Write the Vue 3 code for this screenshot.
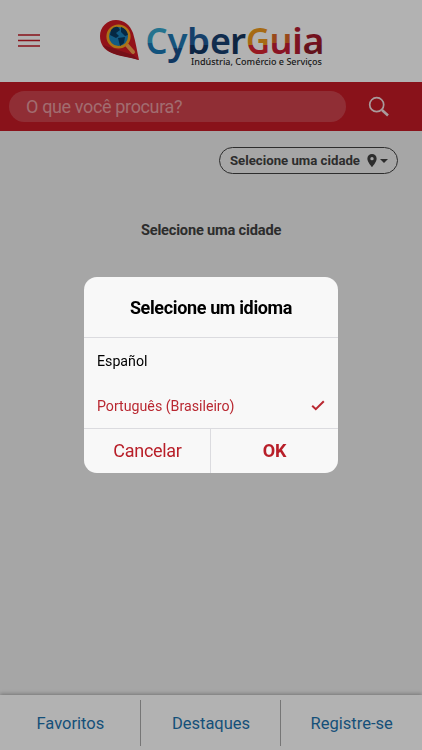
<template>
  <div class="app-page">
    <header class="top-header">
      <button class="menu-button" aria-label="Menu">
        <svg width="22" height="13" viewBox="0 0 22 13">
          <path d="M0 1H22M0 6.5H22M0 12H22" stroke="#c41a26" stroke-width="1.7" />
        </svg>
      </button>

      <svg class="logo" width="230" height="56" viewBox="0 0 230 56" role="img" aria-label="CyberGuia">
        <defs>
          <linearGradient
            v-for="letter in logoLetters"
            :id="letter.id"
            :key="letter.id"
            gradientUnits="userSpaceOnUse"
            x1="0"
            y1="11"
            x2="0"
            y2="45"
          >
            <stop offset="0" :stop-color="letter.top" />
            <stop :offset="letter.split" :stop-color="letter.top" />
            <stop :offset="letter.split" :stop-color="letter.bottom" />
            <stop offset="1" :stop-color="letter.bottom" />
          </linearGradient>
        </defs>

        <!-- Marcador com lupa e globo -->
        <path d="M19 3C10 3 3 10 3 19C3 27 7 33 15 36C24 39 33 40 42 43C40 34 39 26 36 16C33 8 27 3 19 3Z" fill="#d31b25" />
        <path d="M6 28L36 38L42 43C31 40 21 39 15 36Q9 33 6 28Z" fill="#aa1723" />
        <path d="M29 27L36 35" stroke="#f8a04d" stroke-width="4" stroke-linecap="round" />
        <circle cx="21.5" cy="19.5" r="10.8" fill="#1b83bc" stroke="#f5a51f" stroke-width="2.6" />
        <path d="M14 13Q17 9 21 10L23 13L19 16L22 19L19 21L13 18ZM24 10Q30 12 31 18L28 19L24 15ZM21 21L28 20L27 26L23 29Z" fill="#083a60" />

        <g class="logo-name">
          <text
            v-for="letter in logoLetters"
            :key="letter.id"
            :x="letter.x"
            y="36.5"
            :textLength="letter.width"
            lengthAdjust="spacingAndGlyphs"
            :fill="`url(#${letter.id})`"
          >{{ letter.char }}</text>
        </g>
        <text class="logo-slogan" x="94" y="48" textLength="131" lengthAdjust="spacingAndGlyphs">Indústria, Comércio e Serviços</text>
      </svg>
    </header>

    <div class="search-bar">
      <input v-model="search" type="text" placeholder="O que você procura?" />
      <button class="search-button" aria-label="Buscar">
        <svg width="22" height="22" viewBox="0 0 22 22" fill="none" stroke="#f3dfe0">
          <circle cx="8.7" cy="8.7" r="7" stroke-width="1.7" />
          <path d="M14 14L20 19.5" stroke-width="2.6" />
        </svg>
      </button>
    </div>

    <main class="content">
      <button class="city-button">
        <span>Selecione uma cidade</span>
        <svg class="pin" width="10" height="13" viewBox="0 0 10 14">
          <path fill-rule="evenodd" d="M5 0A5 5 0 0 0 0 5C0 8.5 5 14 5 14S10 8.5 10 5A5 5 0 0 0 5 0ZM5 3.2A1.8 1.8 0 1 1 5 6.8A1.8 1.8 0 0 1 5 3.2Z" />
        </svg>
        <svg class="caret" width="8" height="4" viewBox="0 0 8 4"><path d="M0 0H8L4 4Z" /></svg>
      </button>
      <p class="city-message">Selecione uma cidade</p>
    </main>

    <nav class="bottom-tabs">
      <a v-for="tab in tabs" :key="tab" href="#">{{ tab }}</a>
    </nav>

    <div v-if="dialogOpen" class="backdrop">
      <div class="dialog" role="dialog" aria-modal="true">
        <h2>Selecione um idioma</h2>
        <div class="language-list">
          <button
            v-for="language in languages"
            :key="language"
            :class="{ selected: language === selected }"
            @click="selected = language"
          >
            <span>{{ language }}</span>
            <svg v-if="language === selected" width="14" height="11" viewBox="0 0 14 11">
              <path d="M1.2 5.7L4.8 9.2L12.8 1.2" fill="none" stroke="currentColor" stroke-width="2" />
            </svg>
          </button>
        </div>
        <div class="dialog-actions">
          <button @click="dialogOpen = false">Cancelar</button>
          <button class="confirm" @click="dialogOpen = false">OK</button>
        </div>
      </div>
    </div>
  </div>
</template>

<script setup>
import { ref } from 'vue';

const search = ref('');
const dialogOpen = ref(true);
const selected = ref('Português (Brasileiro)');

const languages = ['Español', 'Português (Brasileiro)'];
const tabs = ['Favoritos', 'Destaques', 'Registre-se'];

const logoLetters = [
  { id: 'l-c', char: 'C', x: 48.5, width: 22, top: '#35a5cc', bottom: '#1b78b4', split: 0.45 },
  { id: 'l-y', char: 'y', x: 70.5, width: 20, top: '#1f78b2', bottom: '#164f8b', split: 0.6 },
  { id: 'l-b', char: 'b', x: 90, width: 23, top: '#205c98', bottom: '#123763', split: 0.5 },
  { id: 'l-e', char: 'e', x: 113, width: 21, top: '#173f70', bottom: '#173f70', split: 0.5 },
  { id: 'l-r', char: 'r', x: 133, width: 16, top: '#15365e', bottom: '#15365e', split: 0.5 },
  { id: 'l-g', char: 'G', x: 149, width: 24, top: '#ee981e', bottom: '#d82531', split: 0.5 },
  { id: 'l-u', char: 'u', x: 172.5, width: 23, top: '#dc6928', bottom: '#c51d34', split: 0.43 },
  { id: 'l-i', char: 'i', x: 195, width: 11, top: '#b51c32', bottom: '#b51c32', split: 0.5 },
  { id: 'l-a', char: 'a', x: 205.5, width: 22, top: '#a5192b', bottom: '#8e1b29', split: 0.5 }
];
</script>

<style>
body {
  margin: 0;
}
</style>

<style scoped>
.app-page {
  height: 100vh;
  display: flex;
  flex-direction: column;
  overflow: hidden;
  background: #eee;
  font-family: Roboto, sans-serif;
}

button {
  padding: 0;
  border: none;
  background: none;
  font-family: inherit;
}

.top-header {
  flex: none;
  height: 81.6px;
  box-sizing: border-box;
  padding: 17px 0 0 18px;
  display: flex;
  align-items: flex-start;
  background: #fff;
}

.menu-button {
  width: 22px;
  margin: 17px 57px 0 0;
  display: flex;
}

.logo {
  overflow: visible;
}

.logo-name {
  font: 600 36px 'Noto Sans', sans-serif;
}

.logo-slogan {
  font: 500 9.5px 'Noto Sans', sans-serif;
  fill: #282828;
}

.search-bar {
  flex: none;
  height: 49.6px;
  padding-left: 9px;
  display: flex;
  align-items: center;
  background: #c41a26;
}

.search-bar input {
  width: 337px;
  height: 31px;
  box-sizing: border-box;
  padding: 1px 17px 0;
  border: none;
  border-radius: 16px;
  background: #cf434d;
  font: 18px Roboto, sans-serif;
  letter-spacing: -0.36px;
}

.search-bar input::placeholder {
  color: #e79ca1;
}

.search-button {
  width: 22px;
  height: 22px;
  margin: 2px 0 0 22px;
}

.content {
  flex: 1;
  display: flex;
  flex-direction: column;
}

.city-button {
  align-self: flex-end;
  width: 179px;
  height: 27.5px;
  box-sizing: border-box;
  margin: 15.6px 24px 0 0;
  padding-left: 10px;
  display: flex;
  align-items: center;
  border: 1px solid #414141;
  border-radius: 14px;
  color: #414141;
  font-size: 13.2px;
  font-weight: 700;
}

.city-button svg {
  fill: #414141;
}

.pin {
  margin-left: 7px;
}

.caret {
  margin-left: 3px;
}

.city-message {
  margin: 48px 0 0;
  color: #414141;
  font-size: 14.6px;
  letter-spacing: -0.18px;
  line-height: 17px;
  font-weight: 700;
  text-align: center;
}

.bottom-tabs {
  flex: none;
  height: 55px;
  box-sizing: border-box;
  padding: 5px 0 4px;
  display: flex;
  background: #fff;
  box-shadow: 0 -1px 4px rgba(0, 0, 0, 0.3);
}

.bottom-tabs a {
  flex: 1;
  display: flex;
  align-items: center;
  justify-content: center;
  color: #1e73ae;
  font-size: 16.5px;
  text-decoration: none;
}

.bottom-tabs a + a {
  margin-left: -1px;
  border-left: 1px solid #aaa;
}

.backdrop {
  position: fixed;
  inset: 0;
  display: flex;
  align-items: center;
  justify-content: center;
  background: rgba(0, 0, 0, 0.3);
}

.dialog {
  width: 254px;
  overflow: hidden;
  border-radius: 13px;
  background: #f8f8f8;
}

.dialog h2 {
  height: 60px;
  margin: 0;
  border-bottom: 1px solid #dbdbdf;
  font-size: 18px;
  letter-spacing: -0.36px;
  line-height: 62px;
  font-weight: 700;
  text-align: center;
}

.language-list button {
  width: 100%;
  height: 45px;
  padding: 0 13px;
  display: flex;
  align-items: center;
  justify-content: space-between;
  color: #000;
  font-size: 14.2px;
}

.language-list .selected {
  color: #b92831;
}

.dialog-actions {
  height: 44px;
  display: flex;
  border-top: 1px solid #dbdbdf;
}

.dialog-actions button {
  flex: 1;
  padding-bottom: 2px;
  color: #b81f29;
  font-size: 18px;
  letter-spacing: -0.3px;
}

.dialog-actions .confirm {
  margin-left: -1px;
  border-left: 1px solid #dbdbdf;
  font-weight: 700;
}
</style>
